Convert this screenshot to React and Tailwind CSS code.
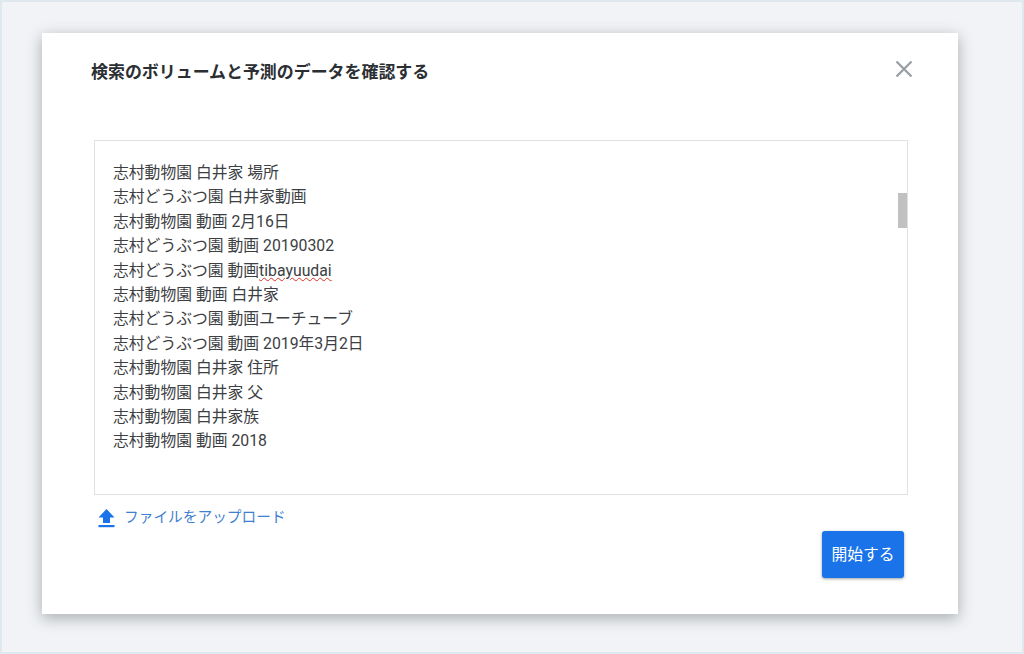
import React from "react";

const lines = [
  "志村動物園 白井家 場所",
  "志村どうぶつ園 白井家動画",
  "志村動物園 動画 2月16日",
  "志村どうぶつ園 動画 20190302",
  null,
  "志村動物園 動画 白井家",
  "志村どうぶつ園 動画ユーチューブ",
  "志村どうぶつ園 動画 2019年3月2日",
  "志村動物園 白井家 住所",
  "志村動物園 白井家 父",
  "志村動物園 白井家族",
  "志村動物園 動画 2018",
];

export default function App() {
  return (
    <div className="w-[1024px] h-[654px] overflow-hidden bg-[#f1f3f6] border-2 border-[#dfe7ef] pt-[31px] pl-[40px] font-['Roboto','Noto_Sans_CJK_JP',sans-serif]">
      <div className="w-[916px] h-[581px] bg-white shadow-[0_4px_14px_rgba(60,64,67,0.4)] pt-[27px] pl-[49px] pr-[50px] flex flex-col">
        <div className="flex justify-between items-start h-[80px]">
          <h1 className="text-[16.95px] leading-[24px] font-bold text-[#2b2f33]">検索のボリュームと予測のデータを確認する</h1>
          <svg width="18" height="18" viewBox="0 0 18 18" className="mr-[-5px]" fill="none" stroke="#9aa0a6" strokeWidth="2.4">
            <path d="M1.5 1.5 L16.5 16.5 M16.5 1.5 L1.5 16.5" />
          </svg>
        </div>
        <div className="relative ml-[3px] w-[814px] h-[355px] border border-[#dfe1e5] pt-[20px] pl-[18px] text-[15.8px] leading-[24.4px] text-[#3c4043]">
          {lines.map((l, i) =>
            l ? (
              <div key={i}>{l}</div>
            ) : (
              <div key={i}>
                志村どうぶつ園 動画<span className="underline decoration-wavy decoration-[#d93025] decoration-1 underline-offset-1">tibayuudai</span>
              </div>
            )
          )}
          <div className="absolute right-0 top-[52px] w-[9px] h-[35px] bg-[#c1c1c1]" />
        </div>
        <div className="flex items-center mt-[10px] ml-[7px] h-[24px] gap-[9px] text-[14.7px] text-[#3f7fd0]">
          <svg width="17" height="20" viewBox="0 0 17 20" fill="#1a73e8" className="mt-[2px]">
            <path d="M8.5 1 L16.5 9.5 H12 V15 H5 V9.5 H0.5 Z" />
            <rect x="0.5" y="17" width="16" height="2.2" />
          </svg>
          <span>ファイルをアップロード</span>
        </div>
        <div className="flex justify-end mt-[2px] pr-[4px]">
          <button className="w-[82px] h-[47px] rounded-[3px] bg-[#1a73e8] text-white text-[15.8px] shadow-[0_1px_3px_rgba(60,64,67,0.5)]">開始する</button>
        </div>
      </div>
    </div>
  );
}
